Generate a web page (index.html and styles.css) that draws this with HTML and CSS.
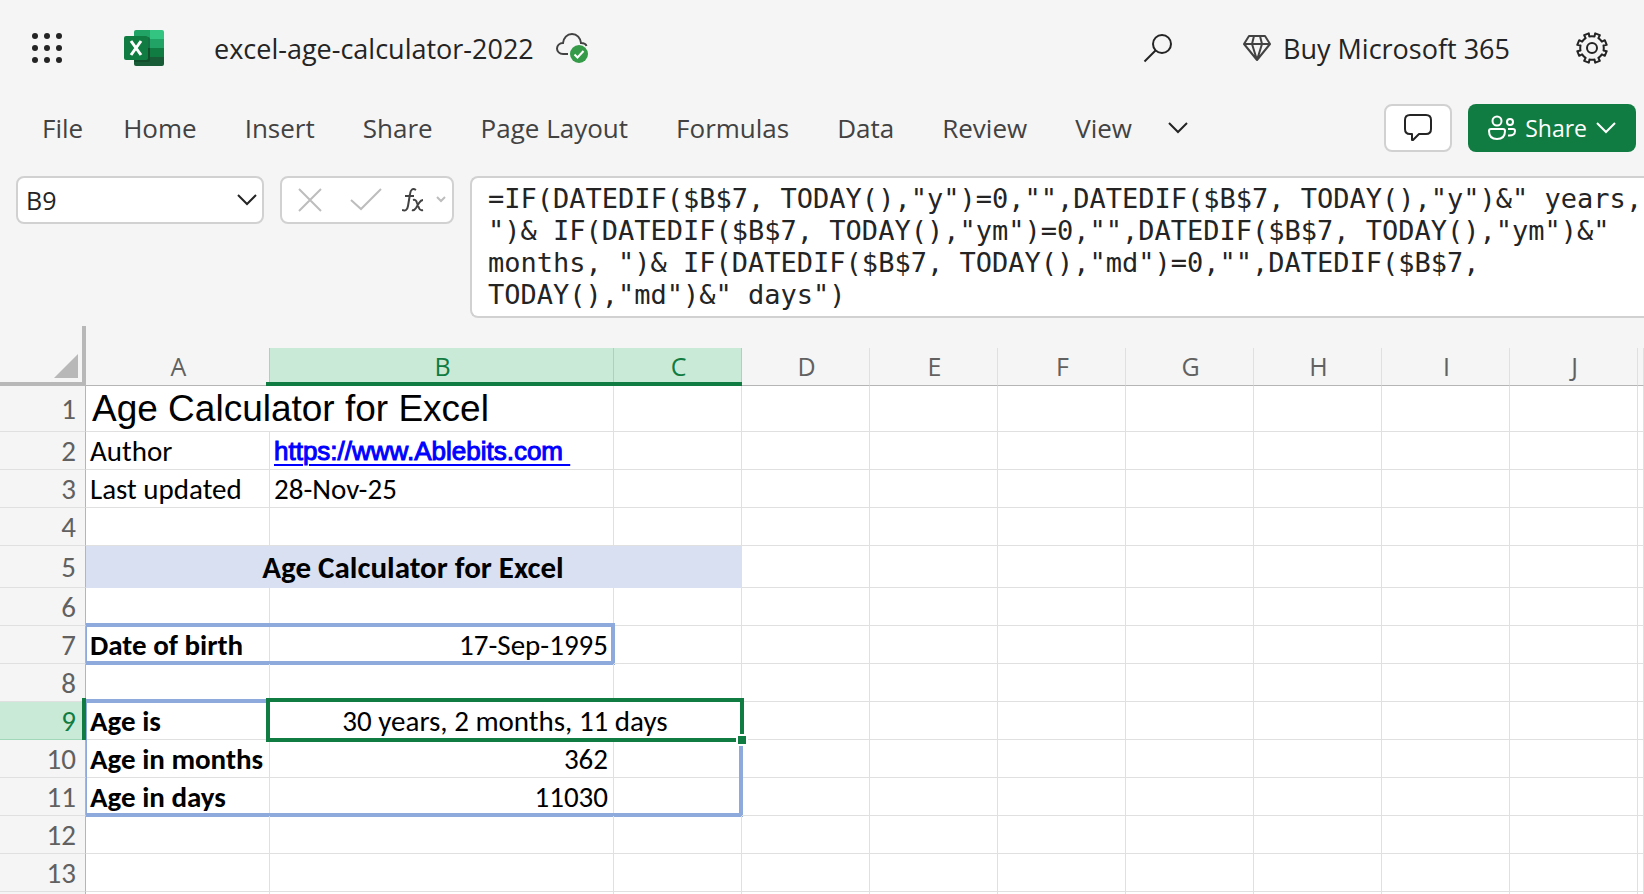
FILE: index.html
```
<!DOCTYPE html>
<html lang="en">
<head>
  <meta charset="utf-8">
  <title>excel-age-calculator-2022</title>
  <link rel="stylesheet" href="styles.css">
</head>
<body>
  <header class="topbar">
    <button class="icon-btn launcher" aria-label="App launcher">
      <svg width="32" height="32" viewBox="0 0 32 32" fill="#242424">
        <circle cx="4" cy="4" r="3"/><circle cx="16" cy="4" r="3"/><circle cx="28" cy="4" r="3"/>
        <circle cx="4" cy="16" r="3"/><circle cx="16" cy="16" r="3"/><circle cx="28" cy="16" r="3"/>
        <circle cx="4" cy="28" r="3"/><circle cx="16" cy="28" r="3"/><circle cx="28" cy="28" r="3"/>
      </svg>
    </button>
    <svg class="logo" width="40" height="36" viewBox="0 0 40 36">
      <path d="M12 0H26V9H10V2Q10 0 12 0Z" fill="#21a366"/>
      <path d="M26 0H38Q40 0 40 2V9H26Z" fill="#33c481"/>
      <path d="M10 9H26V18H10Z" fill="#21a366"/>
      <path d="M26 9H40V18H26Z" fill="#21a366"/>
      <path d="M10 18H26V27H10Z" fill="#185c37"/>
      <path d="M26 18H40V27H26Z" fill="#107c41"/>
      <path d="M10 27H40V34Q40 36 38 36H12Q10 36 10 34Z" fill="#185c37"/>
      <path d="M10 7H24Q26 7 26 9V30Q26 32 24 32H10Z" fill="#0b3d22" opacity="0.5"/>
      <rect y="6" width="24" height="24" rx="2" fill="#107c41"/>
      <path d="M7 11L17 25M17 11L7 25" stroke="#fff" stroke-width="3" fill="none"/>
    </svg>
    <span class="doc-title">excel-age-calculator-2022</span>
    <svg class="cloud" width="32" height="30" viewBox="0 0 32 30" fill="none">
      <path d="M12 21H7C3.500 21 1 18.500 1 15.500S3.500 10 7 10C7.500 5 11 1 16 1S24.500 5 25 10C28 10 30 11.500 30.500 13" stroke="#424242" stroke-width="2"/>
      <circle cx="23" cy="21" r="9" fill="#359b48"/>
      <path d="M18.500 21.500L21.500 24.500L27.500 18" stroke="#fff" stroke-width="2"/>
    </svg>
    <div class="top-actions">
      <button class="icon-btn search" aria-label="Search">
        <svg width="30" height="30" viewBox="0 0 30 30" fill="none" stroke="#242424" stroke-width="2">
          <circle cx="19" cy="11" r="9"/><path d="M12.500 17.500L1.500 28.500"/>
        </svg>
      </button>
      <button class="buy">
        <svg width="28" height="28" viewBox="0 0 28 28" fill="none" stroke="#424242" stroke-width="2" stroke-linejoin="round">
          <path d="M6 2H22L27 10L14 26L1 10ZM1 10H27M11 2L9 10L14 26L19 10L17 2"/>
        </svg>
        Buy Microsoft 365
      </button>
      <button class="icon-btn" aria-label="Settings">
        <svg width="32" height="32" viewBox="0 0 32 32" fill="none" stroke="#242424" stroke-width="2" stroke-linejoin="round">
          <path d="M13.300 4.500L12.800 1.300L8.200 3.200L9.600 6.100A12 12 0 0 0 6.100 9.600L3.200 8.200L1.300 12.800L4.500 13.500A12 12 0 0 0 4.500 18.500L1.300 19.200L3.200 23.800L6.100 22.400A12 12 0 0 0 9.600 25.900L8.200 28.800L12.800 30.700L13.500 27.500A12 12 0 0 0 18.500 27.500L19.200 30.700L23.800 28.800L22.400 25.900A12 12 0 0 0 25.900 22.400L28.800 23.800L30.700 19.200L27.500 18.500A12 12 0 0 0 27.500 13.500L30.700 12.800L28.800 8.200L25.900 9.600A12 12 0 0 0 22.400 6.100L23.800 3.200L19.200 1.300L18.500 4.500A12 12 0 0 0 13.300 4.500Z"/>
          <circle cx="16" cy="16" r="5"/>
        </svg>
      </button>
    </div>
  </header>

  <div class="ribbon">
    <nav class="tabs">
      <button class="file-tab">File</button>
      <button>Home</button>
      <button>Insert</button>
      <button>Share</button>
      <button>Page Layout</button>
      <button>Formulas</button>
      <button>Data</button>
      <button>Review</button>
      <button>View</button>
      <button class="more" aria-label="More tabs">
        <svg width="20" height="12" viewBox="0 0 20 12" fill="none" stroke="#242424" stroke-width="2"><path d="M1 1L10 10L19 1"/></svg>
      </button>
    </nav>
    <button class="comment-btn" aria-label="Comments">
      <svg width="28" height="28" viewBox="0 0 28 28" fill="none" stroke="#242424" stroke-width="2" stroke-linejoin="round">
        <path d="M6 1H22Q27 1 27 6V15Q27 20 22 20H15L9 26H8V20H6Q1 20 1 15V6Q1 1 6 1Z"/>
      </svg>
    </button>
    <button class="share-btn">
      <svg width="28" height="26" viewBox="0 0 28 26" fill="none" stroke="#fff" stroke-width="2">
        <circle cx="9" cy="6" r="4.500"/><circle cx="22" cy="7" r="3"/>
        <path d="M3 14H15Q17 14 17 16C17 21 14 24 9 24S1 21 1 16Q1 14 3 14Z"/>
        <path d="M20 14H25Q27 14 27 16C27 19 25 21 20 20.500"/>
      </svg>
      <span>Share</span>
      <svg width="20" height="12" viewBox="0 0 20 12" fill="none" stroke="#fff" stroke-width="2"><path d="M1 1L10 10L19 1"/></svg>
    </button>
  </div>

  <div class="formula-row">
    <div class="name-box">
      <input type="text" value="B9" aria-label="Name box">
      <button aria-label="Named ranges">
        <svg width="20" height="12" viewBox="0 0 20 12" fill="none" stroke="#242424" stroke-width="2"><path d="M1 1L10 10L19 1"/></svg>
      </button>
    </div>
    <div class="fx-box">
      <button class="cancel" aria-label="Cancel">
        <svg width="24" height="24" viewBox="0 0 24 24" fill="none" stroke="#bdbdbd" stroke-width="2"><path d="M1 1L23 23M23 1L1 23"/></svg>
      </button>
      <button class="enter" aria-label="Enter">
        <svg width="32" height="24" viewBox="0 0 32 24" fill="none" stroke="#bdbdbd" stroke-width="2"><path d="M1 12L11 21L31 1"/></svg>
      </button>
      <button class="insert-fn" aria-label="Insert function">
        <svg width="22" height="24" viewBox="0 0 22 24" fill="none" stroke="#424242" stroke-width="2">
          <path d="M14 2Q9 -1 8 6L6 18Q5 24 0 22M3 8H12"/>
          <path d="M11 12Q14 11 15 15L17 20Q18 23 21 22M21 12Q19 12 17 15L14 20Q12 23 10 22"/>
        </svg>
      </button>
      <button aria-label="Function list">
        <svg width="10" height="8" viewBox="0 0 10 8" fill="none" stroke="#bdbdbd" stroke-width="2"><path d="M1 1L5 5L9 1"/></svg>
      </button>
    </div>
    <textarea class="formula" rows="4" aria-label="Formula bar" spellcheck="false">=IF(DATEDIF($B$7, TODAY(),"y")=0,"",DATEDIF($B$7, TODAY(),"y")&amp;" years,
")&amp; IF(DATEDIF($B$7, TODAY(),"ym")=0,"",DATEDIF($B$7, TODAY(),"ym")&amp;"
months, ")&amp; IF(DATEDIF($B$7, TODAY(),"md")=0,"",DATEDIF($B$7,
TODAY(),"md")&amp;" days")</textarea>
  </div>

  <main class="sheet">
    <table>
      <colgroup>
        <col class="col-num"><col class="col-a"><col class="col-b">
        <col class="col"><col class="col"><col class="col"><col class="col">
        <col class="col"><col class="col"><col class="col"><col class="col">
        <col>
      </colgroup>
      <thead>
        <tr>
          <th class="corner"><svg width="24" height="24" viewBox="0 0 24 24"><path d="M24 0V24H0Z" fill="#b8b8b8"/></svg></th>
          <th class="before-selected">A</th>
          <th class="selected">B</th>
          <th class="selected">C</th>
          <th>D</th><th>E</th><th>F</th><th>G</th><th>H</th><th>I</th><th>J</th><th></th>
        </tr>
      </thead>
      <tbody>
        <tr class="title-row">
          <th>1</th><td colspan="2" class="sheet-title">Age Calculator for Excel</td>
          <td></td><td></td><td></td><td></td><td></td><td></td><td></td><td></td><td></td>
        </tr>
        <tr>
          <th>2</th><td>Author</td><td class="link-cell"><a href="https://www.Ablebits.com">https://www.Ablebits.com&nbsp;</a></td>
          <td></td><td></td><td></td><td></td><td></td><td></td><td></td><td></td><td></td>
        </tr>
        <tr>
          <th>3</th><td>Last updated</td><td>28-Nov-25</td>
          <td></td><td></td><td></td><td></td><td></td><td></td><td></td><td></td><td></td>
        </tr>
        <tr>
          <th>4</th><td></td><td></td>
          <td></td><td></td><td></td><td></td><td></td><td></td><td></td><td></td><td></td>
        </tr>
        <tr class="banner-row">
          <th>5</th><td colspan="3" class="banner">Age Calculator for Excel</td>
          <td></td><td></td><td></td><td></td><td></td><td></td><td></td><td></td>
        </tr>
        <tr>
          <th>6</th><td></td><td></td>
          <td></td><td></td><td></td><td></td><td></td><td></td><td></td><td></td><td></td>
        </tr>
        <tr>
          <th>7</th><td class="label edge top bottom left">Date of birth</td><td class="value edge top bottom right">17-Sep-1995</td>
          <td></td><td></td><td></td><td></td><td></td><td></td><td></td><td></td><td></td>
        </tr>
        <tr>
          <th>8</th><td></td><td></td>
          <td></td><td></td><td></td><td></td><td></td><td></td><td></td><td></td><td></td>
        </tr>
        <tr>
          <th class="selected">9</th><td class="label edge top left">Age is</td><td colspan="2" class="active-cell">30 years, 2 months, 11 days<span class="fill-handle"></span></td>
          <td></td><td></td><td></td><td></td><td></td><td></td><td></td><td></td>
        </tr>
        <tr>
          <th>10</th><td class="label edge left">Age in months</td><td class="value">362</td><td class="edge right"></td>
          <td></td><td></td><td></td><td></td><td></td><td></td><td></td><td></td>
        </tr>
        <tr>
          <th>11</th><td class="label edge left bottom">Age in days</td><td class="value edge bottom">11030</td><td class="edge right bottom"></td>
          <td></td><td></td><td></td><td></td><td></td><td></td><td></td><td></td>
        </tr>
        <tr>
          <th>12</th><td></td><td></td>
          <td></td><td></td><td></td><td></td><td></td><td></td><td></td><td></td><td></td>
        </tr>
        <tr>
          <th>13</th><td></td><td></td>
          <td></td><td></td><td></td><td></td><td></td><td></td><td></td><td></td><td></td>
        </tr>
        <tr>
          <th></th><td></td><td></td>
          <td></td><td></td><td></td><td></td><td></td><td></td><td></td><td></td><td></td>
        </tr>
      </tbody>
    </table>
  </main>
</body>
</html>
```
FILE: styles.css
```
:root {
  --green: #107c41;
  --green-light: #caead8;
  --green-line: #a0d8b9;
  --chrome: #f5f5f5;
  --text: #242424;
  --text-light: #424242;
  --heading: #616161;
  --border: #d1d1d1;
  --grid: #e0e0e0;
  --range: #8ea9db;
}

* {
  box-sizing: border-box;
}

body {
  margin: 0;
  height: 100vh;
  display: flex;
  flex-direction: column;
  overflow: hidden;
  background: var(--chrome);
  color: var(--text);
  font-family: 'Segoe UI', 'Open Sans', sans-serif;
}

button {
  display: flex;
  align-items: center;
  padding: 0;
  border: none;
  background: none;
  color: inherit;
  font: inherit;
  cursor: pointer;
}

svg {
  display: block;
  flex-shrink: 0;
}

/* Top bar */
.topbar {
  display: flex;
  align-items: center;
  height: 96px;
  padding: 0 36px 0 31px;
  font-size: 27px;
}

.logo {
  margin-left: 61px;
}

.doc-title {
  margin-left: 50px;
}

.cloud {
  margin-left: 22px;
}

.top-actions {
  display: flex;
  align-items: center;
  margin-left: auto;
}

.search {
  margin-right: 70px;
}

.buy {
  gap: 12px;
  margin-right: 66px;
}

/* Ribbon */
.ribbon {
  display: flex;
  align-items: center;
  height: 64px;
  padding: 0 8px 0 42px;
}

.tabs {
  display: flex;
  flex: 1;
  gap: 48px;
  font-size: 26px;
  color: var(--text-light);
}

.tabs button {
  white-space: nowrap;
}

.tabs .file-tab {
  margin-right: -8px;
}

.tabs .more {
  margin-left: -12px;
}

.comment-btn {
  justify-content: center;
  width: 68px;
  height: 48px;
  margin-right: 16px;
  border: 2px solid var(--border);
  border-radius: 8px;
  background: #fff;
}

.share-btn {
  gap: 9px;
  height: 48px;
  padding: 0 20px;
  border-radius: 8px;
  background: var(--green);
  color: #fff;
  font-size: 23px;
}

/* Formula bar */
.formula-row {
  display: flex;
  align-items: flex-start;
  gap: 16px;
  padding: 16px 0 30px 16px;
}

.name-box,
.fx-box {
  display: flex;
  align-items: center;
  height: 48px;
  border: 2px solid var(--border);
  border-radius: 8px;
  background: #fff;
}

.name-box {
  width: 248px;
  padding: 0 5px 0 8px;
}

.name-box input {
  flex: 1;
  min-width: 0;
  padding: 0;
  border: none;
  outline: none;
  background: none;
  color: var(--text);
  font: 25px 'Segoe UI', 'Open Sans', sans-serif;
}

.fx-box {
  width: 174px;
  padding-left: 16px;
}

.cancel {
  margin-right: 28px;
}

.enter {
  margin-right: 20px;
}

.insert-fn {
  margin-right: 12px;
}

.formula {
  flex: 1;
  height: 142px;
  padding: 5px 0 5px 16px;
  border: 2px solid var(--border);
  border-right: none;
  border-radius: 8px 0 0 8px;
  outline: none;
  resize: none;
  overflow: hidden;
  background: #fff;
  color: var(--text);
  font: 27px/32px 'DejaVu Sans Mono', monospace;
  white-space: pre;
}

/* Sheet */
.sheet {
  flex: 1;
  min-height: 0;
}

table {
  width: 100%;
  table-layout: fixed;
  border-collapse: separate;
  border-spacing: 0;
  background: #fff;
}

.col-num {
  width: 86px;
}

.col-a {
  width: 184px;
}

.col-b {
  width: 344px;
}

.col {
  width: 128px;
}

tr {
  height: 38px;
}

.title-row {
  height: 46px;
}

.banner-row {
  height: 42px;
}

th,
td {
  position: relative;
  padding: 0 5px 0 4px;
  border-right: 1px solid var(--grid);
  border-bottom: 1px solid var(--grid);
  line-height: 32px;
  white-space: nowrap;
}

td {
  color: #000;
  font-family: Calibri, Carlito, Lato, sans-serif;
  font-size: 29px;
}

th {
  background: var(--chrome);
  color: var(--heading);
  font-weight: 400;
  font-size: 25px;
}

thead th {
  padding: 0 4px 2px 6px;
  border-bottom-color: #b5b5b5;
}

tbody th {
  padding: 0 9px 0 0;
  border-right-color: #b5b5b5;
  font-family: Calibri, Carlito, Lato, sans-serif;
  font-size: 29px;
  text-align: right;
}

thead .corner {
  padding: 0 8px 0 0;
  border-right: none;
  border-bottom: 4px solid #b8b8b8;
}

.corner svg {
  margin: 2px 0 0 auto;
}

.corner::after {
  content: '';
  position: absolute;
  top: -22px;
  right: 0;
  bottom: -4px;
  width: 4px;
  background: #b8b8b8;
}

th.selected {
  background: var(--green-light);
  border-color: var(--green-line);
  color: var(--green);
}

.before-selected {
  border-right-color: var(--green-line);
}

thead .selected::after {
  content: '';
  position: absolute;
  left: -4px;
  right: -2px;
  bottom: -1px;
  height: 4px;
  background: var(--green);
}

tbody .selected::after {
  content: '';
  position: absolute;
  top: -4px;
  right: -1px;
  bottom: -3px;
  width: 4px;
  background: var(--green);
}

.sheet-title {
  padding-left: 6px;
  font-family: Arial, 'Liberation Sans', sans-serif;
  font-size: 37px;
  line-height: 40px;
}

.link-cell {
  font-family: Arial, 'Liberation Sans', sans-serif;
  font-size: 26px;
}

.link-cell a {
  color: #00f;
  -webkit-text-stroke: 1px #00f;
  text-decoration: underline 2px;
  text-underline-offset: 4px;
}

.banner {
  border-color: #d9e0f2;
  background: #d9e0f2;
  font-size: 31px;
  font-weight: 700;
  text-align: center;
}

.label {
  font-weight: 700;
}

.value {
  text-align: right;
}

/* Cell borders drawn over the grid lines */
.edge::after {
  content: '';
  position: absolute;
  inset: -3px -2px -2px 0;
  border: 0 solid var(--range);
  pointer-events: none;
}

.edge:not(.right)::after {
  right: -1px;
}

.edge.top::after {
  border-top-width: 4px;
}

.edge.right::after {
  border-right-width: 4px;
}

.edge.bottom::after {
  border-bottom-width: 4px;
}

.edge.left::after {
  border-left-width: 1px;
}

.active-cell {
  z-index: 1;
  text-align: center;
}

.active-cell::after {
  content: '';
  position: absolute;
  inset: -4px -3px -3px -4px;
  border: 4px solid var(--green);
}

.fill-handle {
  position: absolute;
  right: -7px;
  bottom: -7px;
  z-index: 1;
  width: 12px;
  height: 12px;
  border: 2px solid #fff;
  background: var(--green);
}
```
